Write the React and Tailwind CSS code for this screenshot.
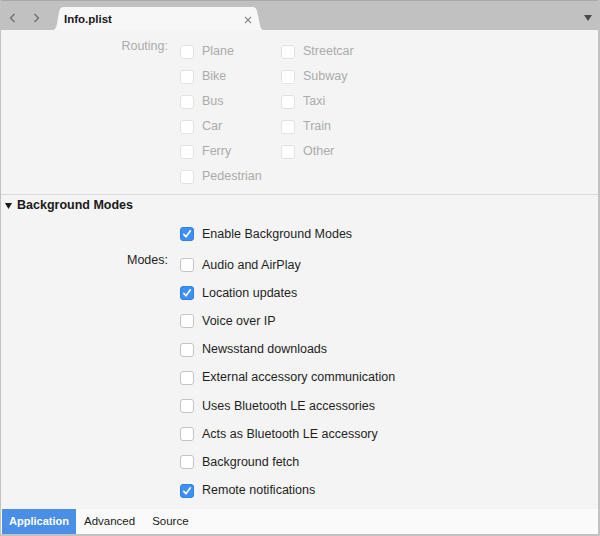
import React from "react";

const routing = [
  ["Plane", "Streetcar"],
  ["Bike", "Subway"],
  ["Bus", "Taxi"],
  ["Car", "Train"],
  ["Ferry", "Other"],
  ["Pedestrian", null],
];

const modes = [
  { label: "Audio and AirPlay", checked: false },
  { label: "Location updates", checked: true },
  { label: "Voice over IP", checked: false },
  { label: "Newsstand downloads", checked: false },
  { label: "External accessory communication", checked: false },
  { label: "Uses Bluetooth LE accessories", checked: false },
  { label: "Acts as Bluetooth LE accessory", checked: false },
  { label: "Background fetch", checked: false },
  { label: "Remote notifications", checked: true },
];

const Checkbox = ({ checked = false, disabled = false }) => {
  if (checked) {
    return (
      <span className="w-[14px] h-[14px] rounded-[3px] bg-[#3d8ff4] border border-[#2f7fe6] flex items-center justify-center shrink-0">
        <svg width="10" height="10" viewBox="0 0 10 10">
          <path d="M1.8 5.4 L4 7.8 L8.4 1.8" fill="none" stroke="white" strokeWidth="1.6" strokeLinecap="round" strokeLinejoin="round" />
        </svg>
      </span>
    );
  }
  return (
    <span
      className={`w-[14px] h-[14px] rounded-[3px] bg-white border shrink-0 ${
        disabled ? "border-[#e2e2e2]" : "border-[#c4c4c4]"
      }`}
    />
  );
};

const Option = ({ label, checked, disabled }) => (
  <div className="flex items-center gap-[8px]">
    <Checkbox checked={checked} disabled={disabled} />
    <span className={disabled ? "text-[#ababab]" : "text-[#1e1e1e]"}>{label}</span>
  </div>
);

const Tab = () => (
  <div className="relative w-[212px] h-[23px] self-end shrink-0">
    <svg className="absolute inset-0" width="212" height="23" viewBox="0 0 212 23">
      <path
        d="M0 23 C3 23 4 21 5 17 L7 5 C8 1 9 0 13 0 L200 0 C203 0 204 1 205 4 L208 18 C209 22 210 23 212 23 Z"
        fill="#f7f7f7"
      />
    </svg>
    <div className="relative flex items-center h-full pl-[12px] pr-[12px] pt-[2px]">
      <span className="font-bold text-[11.5px] text-[#1a1a1a] flex-1">Info.plist</span>
      <svg width="8" height="8" viewBox="0 0 8 8">
        <path d="M1 1 L7 7 M7 1 L1 7" stroke="#8a8a8a" strokeWidth="1.1" />
      </svg>
    </div>
  </div>
);

export default function App() {
  return (
    <div
      className="w-[600px] h-[536px] flex flex-col bg-[#f4f4f4] border-l border-r-2 border-b-2 border-[#c2c2c2] text-[12.5px]"
      style={{ fontFamily: '"Liberation Sans", Arial, sans-serif' }}
    >
      {/* Tab bar */}
      <div className="h-[30px] bg-[#c1c1c1] border-t border-[#a9a9a9] flex items-stretch shrink-0">
        <div className="w-[51px] shrink-0 flex items-center gap-[17px] pl-[8px] pt-[5px]">
          <svg width="7" height="10" viewBox="0 0 7 10" className="shrink-0">
            <path d="M5.5 1 L1.5 5 L5.5 9" fill="none" stroke="#6b6b6b" strokeWidth="1.2" />
          </svg>
          <svg width="7" height="10" viewBox="0 0 7 10" className="shrink-0">
            <path d="M1.5 1 L5.5 5 L1.5 9" fill="none" stroke="#6b6b6b" strokeWidth="1.2" />
          </svg>
        </div>
        <Tab />
        <div className="flex-1 flex items-center justify-end pr-[6px] pt-[5px]">
          <svg width="8" height="6" viewBox="0 0 8 6">
            <path d="M0 0 L8 0 L4 6 Z" fill="#4a4a4a" />
          </svg>
        </div>
      </div>

      {/* Content */}
      <div className="flex-1 flex flex-col">
        {/* Routing */}
        <div className="flex pt-[9px] pb-[5px] border-b border-[#dadada]">
          <div className="w-[167px] text-right text-[#ababab] -mt-[2px]">Routing:</div>
          <div className="ml-[12px] grid grid-cols-[101px_auto] auto-rows-[25px] items-center">
            {routing.flatMap(([a, b]) => [
              <Option key={a} label={a} disabled />,
              b ? <Option key={b} label={b} disabled /> : <span key={a + "-empty"} />,
            ])}
          </div>
        </div>

        {/* Background Modes */}
        <div className="flex items-center gap-[5px] pl-[4px] h-[17px] mt-[2px]">
          <svg width="7" height="6" viewBox="0 0 7 6">
            <path d="M0 0 L7 0 L3.5 6 Z" fill="#1a1a1a" />
          </svg>
          <span className="font-bold text-[12.5px] text-[#1a1a1a]">Background Modes</span>
        </div>

        <div className="flex mt-[8px]">
          <div className="w-[167px]" />
          <div className="ml-[12px] h-[24px] flex items-center">
            <Option label="Enable Background Modes" checked />
          </div>
        </div>

        <div className="flex mt-[5px]">
          <div className="w-[167px] text-right text-[#1e1e1e]">Modes:</div>
          <div className="ml-[12px] flex flex-col">
            {modes.map((m) => (
              <div key={m.label} className="h-[28.2px] flex items-center">
                <Option label={m.label} checked={m.checked} />
              </div>
            ))}
          </div>
        </div>
      </div>

      {/* Bottom bar */}
      <div className="h-[25px] bg-[#fafafa] flex items-stretch shrink-0">
        <div className="w-[74px] ml-[1px] bg-[#4b8ee6] text-white font-bold text-[11px] flex items-center justify-center">
          Application
        </div>
        <div className="flex items-center pl-[8px] text-[11.5px] text-[#1a1a1a]">Advanced</div>
        <div className="flex items-center pl-[17px] text-[11.5px] text-[#1a1a1a]">Source</div>
      </div>
    </div>
  );
}
